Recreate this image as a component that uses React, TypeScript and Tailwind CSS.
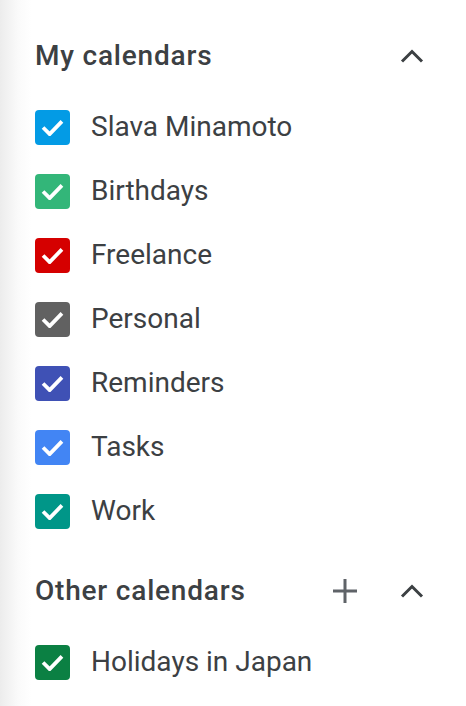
const myCalendars = [
  { name: "Slava Minamoto", color: "bg-[#039be5]" },
  { name: "Birthdays", color: "bg-[#33b679]" },
  { name: "Freelance", color: "bg-[#d50000]" },
  { name: "Personal", color: "bg-[#616161]" },
  { name: "Reminders", color: "bg-[#3f51b5]" },
  { name: "Tasks", color: "bg-[#4285f4]" },
  { name: "Work", color: "bg-[#009688]" },
];

const otherCalendars = [{ name: "Holidays in Japan", color: "bg-[#0b8043]" }];

function Check({ color }: { color: string }) {
  return (
    <span className={`flex h-[35px] w-[35px] shrink-0 items-center justify-center rounded-[4px] ${color}`}>
      <svg viewBox="0 0 24 18" className="h-[17px] w-[23px]" fill="none">
        <path d="M2 9l7 7L22 2.5" stroke="white" strokeWidth="4" />
      </svg>
    </span>
  );
}

function Chevron() {
  return (
    <svg viewBox="0 0 24 14" className="h-[14px] w-[24px]" fill="none">
      <path d="M2 12.5L12 2.5l10 10" stroke="#3c4043" strokeWidth="3" />
    </svg>
  );
}

function Plus() {
  return (
    <svg viewBox="0 0 26 26" className="h-[26px] w-[26px]" fill="none">
      <path d="M13 1v24M1 13h24" stroke="#5f6368" strokeWidth="3" />
    </svg>
  );
}

function CalendarRow({ name, color }: { name: string; color: string }) {
  return (
    <div className="flex h-16 items-center gap-[21px]">
      <Check color={color} />
      <span className="text-[28px] text-[#3c4043]">{name}</span>
    </div>
  );
}

export default function App() {
  return (
    <div
      className="h-[706px] w-[466px] overflow-hidden bg-[linear-gradient(90deg,#ececec_0px,#fafafa_18px,#ffffff_32px)] pl-[35px] pr-[42px] pt-[34px]"
      style={{ fontFamily: "Roboto, 'Noto Sans', sans-serif" }}
    >
      <div className="flex h-11 items-center justify-between">
        <h2 className="text-[28px] font-medium tracking-[0.8px] text-[#3c4043]">My calendars</h2>
        <Chevron />
      </div>
      <div className="mt-[17px]">
        {myCalendars.map((c) => (
          <CalendarRow key={c.name} {...c} />
        ))}
      </div>
      <div className="mt-[26px] flex h-11 items-center justify-between">
        <h2 className="text-[28px] font-medium tracking-[0.8px] text-[#3c4043]">Other calendars</h2>
        <div className="flex items-center gap-[42px]">
          <Plus />
          <Chevron />
        </div>
      </div>
      <div className="mt-[17px]">
        {otherCalendars.map((c) => (
          <CalendarRow key={c.name} {...c} />
        ))}
      </div>
    </div>
  );
}
